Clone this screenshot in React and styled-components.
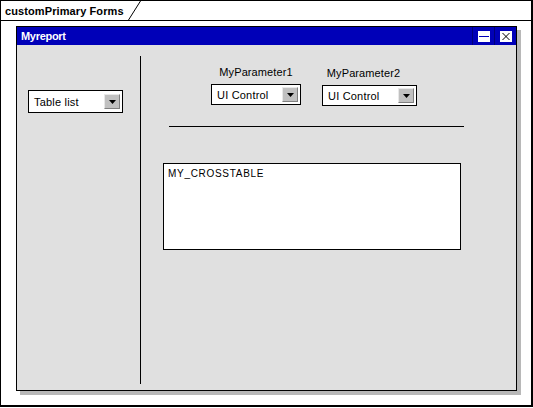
import React from 'react';
import styled, { createGlobalStyle } from 'styled-components';

const GlobalStyle = createGlobalStyle`
  html, body {
    margin: 0;
    padding: 0;
    background: #ffffff;
    font-family: "Liberation Sans", Arial, sans-serif;
  }
`;

const Frame = styled.div`
  box-sizing: border-box;
  width: 533px;
  height: 407px;
  border: 1px solid #000;
  border-right-width: 2px;
  border-bottom-width: 2px;
  background: #fff;
  display: flex;
  flex-direction: column;
`;

const TabRow = styled.div`
  display: flex;
  height: 19px;
  border-bottom: 1px solid #000;
`;

const Tab = styled.div`
  display: flex;
  align-items: center;
  height: 19px;
`;

const TabLabel = styled.span`
  font-size: 11px;
  font-weight: bold;
  letter-spacing: 0.1px;
  padding-left: 4px;
  width: 123px;
  color: #000;
`;

const Window = styled.div`
  box-sizing: border-box;
  margin: 5px 0 0 15px;
  width: 501px;
  height: 365px;
  border: 1px solid #000;
  background: #e0e0e0;
  box-shadow: 4px 4px 0 #b8b8b8;
  display: flex;
  flex-direction: column;
`;

const TitleBar = styled.div`
  display: flex;
  align-items: center;
  height: 18px;
  background: #0000b8;
  color: #fff;
  padding-left: 4px;
`;

const Title = styled.span`
  flex: 1;
  font-size: 11px;
  font-weight: bold;
  letter-spacing: -0.3px;
`;

const TitleButton = styled.div`
  width: 21px;
  height: 18px;
  display: flex;
  align-items: center;
  justify-content: center;
  border-left: 1px solid #00007a;
`;

const Body = styled.div`
  flex: 1;
  display: flex;
`;

const LeftPanel = styled.div`
  width: 123px;
  padding: 45px 0 0 11px;
  box-sizing: border-box;
`;

const Divider = styled.div`
  width: 1px;
  background: #000;
  margin: 11px 0 6px;
`;

const RightPanel = styled.div`
  flex: 1;
  padding-top: 21px;
  display: flex;
  flex-direction: column;
`;

const ParamRow = styled.div`
  display: flex;
  gap: 21px;
  margin-left: 70px;
`;

const Param = styled.div`
  display: flex;
  flex-direction: column;
  align-items: center;
  padding-top: ${p => p.$offset || 0}px;
`;

const ParamLabel = styled.span`
  font-size: 11px;
  letter-spacing: 0.1px;
  line-height: 12px;
  color: #000;
  margin-bottom: 6px;
  margin-left: ${p => p.$shift || 0}px;
`;

const Select = styled.div`
  box-sizing: border-box;
  width: ${p => p.$width}px;
  height: ${p => p.$height || 21}px;
  background: #fff;
  border: 1px solid #000;
  display: flex;
  align-items: center;
  justify-content: space-between;
  padding: 0 2px 0 5px;
`;

const SelectText = styled.span`
  font-size: 11px;
  letter-spacing: 0.2px;
  color: #000;
`;

const ArrowButton = styled.div`
  box-sizing: border-box;
  width: 16px;
  height: 15px;
  background: #c0c0c0;
  border-top: 1px solid #e8e8e8;
  border-left: 1px solid #e8e8e8;
  border-right: 1px solid #808080;
  border-bottom: 1px solid #808080;
  display: flex;
  align-items: center;
  justify-content: center;
`;

const Rule = styled.div`
  height: 1px;
  width: 295px;
  background: #000;
  margin: 20px 0 0 28px;
`;

const CrossTable = styled.div`
  box-sizing: border-box;
  width: 298px;
  height: 87px;
  margin: 36px 0 0 22px;
  background: #fff;
  border: 1px solid #000;
  padding: 4px 0 0 4px;
  font-size: 10px;
  letter-spacing: 0.7px;
  color: #000;
`;

const Arrow = () => (
  <svg width="7" height="4" viewBox="0 0 7 4">
    <path d="M0 0 H7 L3.5 4 Z" fill="#000" />
  </svg>
);

const Dropdown = ({ label, width, height }) => (
  <Select $width={width} $height={height}>
    <SelectText>{label}</SelectText>
    <ArrowButton>
      <Arrow />
    </ArrowButton>
  </Select>
);

const App = () => (
  <>
    <GlobalStyle />
    <Frame>
      <TabRow>
        <Tab>
          <TabLabel>customPrimary Forms</TabLabel>
          <svg width="14" height="19" viewBox="0 0 14 19">
            <path d="M0.5 19 L12.5 0" stroke="#000" strokeWidth="1" fill="none" />
          </svg>
        </Tab>
      </TabRow>
      <Window>
        <TitleBar>
          <Title>Myreport</Title>
          <TitleButton>
            <svg width="12" height="11" viewBox="0 0 12 11">
              <rect x="0.5" y="0.5" width="11" height="10" fill="#fff" stroke="#fff" />
              <line x1="1" y1="5.5" x2="11" y2="5.5" stroke="#0000b8" strokeWidth="1" />
            </svg>
          </TitleButton>
          <TitleButton>
            <svg width="12" height="11" viewBox="0 0 12 11">
              <rect x="0.5" y="0.5" width="11" height="10" fill="#fff" stroke="#fff" />
              <path d="M2.5 2 L9.5 9 M9.5 2 L2.5 9" stroke="#000" strokeWidth="1" />
            </svg>
          </TitleButton>
        </TitleBar>
        <Body>
          <LeftPanel>
            <Dropdown label="Table list" width={95} height={23} />
          </LeftPanel>
          <Divider />
          <RightPanel>
            <ParamRow>
              <Param>
                <ParamLabel>MyParameter1</ParamLabel>
                <Dropdown label="UI Control" width={90} />
              </Param>
              <Param $offset={1}>
                <ParamLabel $shift={-12}>MyParameter2</ParamLabel>
                <Dropdown label="UI Control" width={95} />
              </Param>
            </ParamRow>
            <Rule />
            <CrossTable>MY_CROSSTABLE</CrossTable>
          </RightPanel>
        </Body>
      </Window>
    </Frame>
  </>
);

export default App;
